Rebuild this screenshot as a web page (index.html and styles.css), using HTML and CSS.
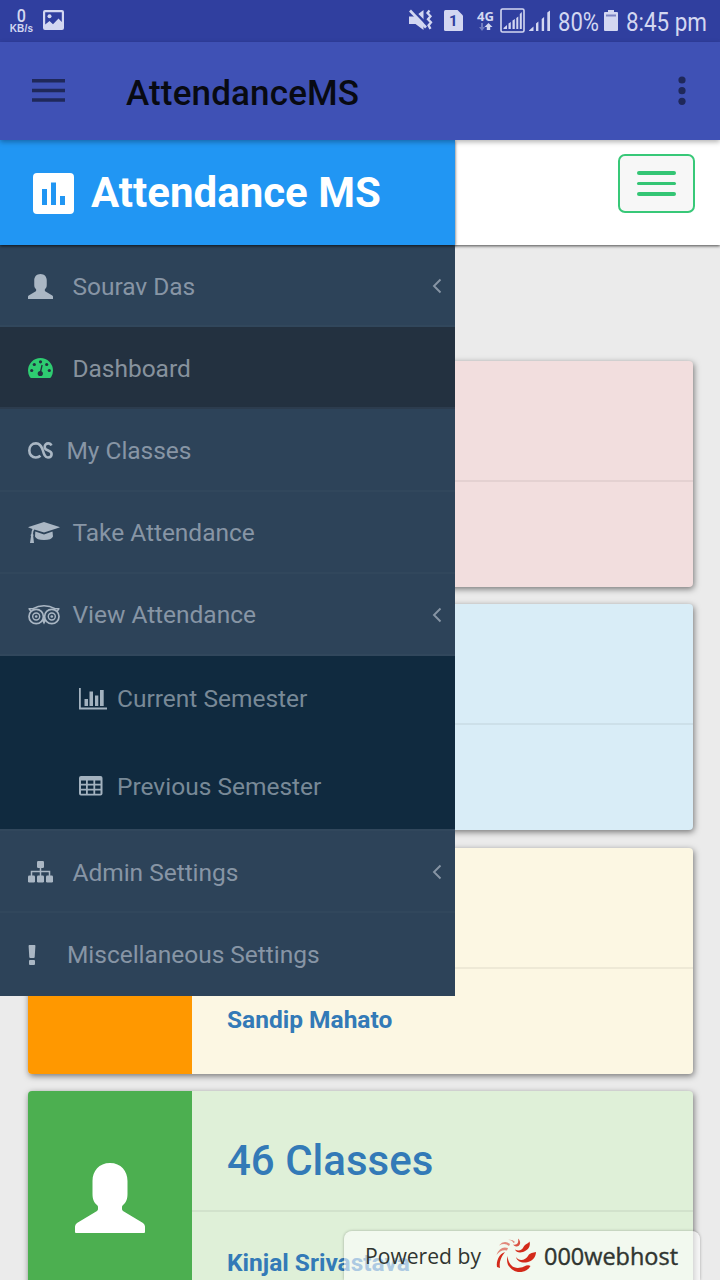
FILE: index.html
```html
<!DOCTYPE html>
<html lang="en">
<head>
<meta charset="utf-8">
<title>AttendanceMS</title>
<link rel="stylesheet" href="styles.css">
</head>
<body>
<svg class="defs" width="0" height="0" aria-hidden="true">
  <symbol id="user" viewBox="0 0 70 70"><path d="M35 0C24 0 17.500 8 17.500 18v13c0 6 2 9 4.500 11 1 1 1 1.500 1 3 0 1.500 0 2-1 3L2 60Q0 61.500 0 63.500V69q0 1 1 1h68q1 0 1-1v-5.500Q70 61.500 68 60L48 48c-1-1-1-1.500-1-3 0-1.500 0-2 1-3 2.500-2 4.500-5 4.500-11V18C52.500 8 46 0 35 0z"/></symbol>
  <symbol id="chevron" viewBox="0 0 10 16"><path d="M8.500 1.500 2 8l6.500 6.500" fill="none" stroke="currentColor" stroke-width="1.900"/></symbol>
</svg>
<div class="screen">
  <header class="statusbar">
    <div class="speed"><b>0</b><span>KB/s</span></div>
    <svg class="photo" width="21" height="21" viewBox="0 0 21 21"><path fill-rule="evenodd" d="M2 0h17q2 0 2 2v16q0 2-2 2H2q-2 0-2-2V2q0-2 2-2zM2.200 2.200v12.300L6.500 11l3.500 3.300L15.500 8.500l3.300 3.500V2.200z"/><circle cx="6.500" cy="6.300" r="2"/></svg>
    <div class="status-right">
      <svg class="mute" width="24" height="22" viewBox="0 0 24 22"><path d="M0 7.500h6L14.500 1V21L6.500 15H0z"/><path d="M2.500 0 19 16.500" stroke="#303f9f" stroke-width="2.500"/><path d="M1 1.500 17 18.500" fill="none" stroke="currentColor" stroke-width="2.600"/><path d="m20.500 1.500-2 2.500 3 3.200-2.500 3 3 3.200-2.500 3 2 3.500" fill="none" stroke="currentColor" stroke-width="2.300"/></svg>
      <svg class="sim" width="19" height="21" viewBox="0 0 19 21"><path d="M1.500 0h12L19 5.500v14q0 1.500-1.500 1.500h-16Q0 21 0 19.500v-18Q0 0 1.500 0z"/><text x="5" y="16" class="sim-no">1</text></svg>
      <svg class="network" width="17" height="22" viewBox="0 0 17 22"><text x="0" y="10.500" textLength="17" lengthAdjust="spacingAndGlyphs" class="net-label">4G</text><path d="M4 13h2v4h2l-3 4-3-4h2z" opacity=".4"/><path d="m11.500 13 4 4h-2.300v3h-3.400v-3H7.500z"/></svg>
      <svg class="boxed" width="25" height="25" viewBox="0 0 25 25"><rect x="1" y="1" width="23" height="23" rx="1.500" fill="none" stroke="currentColor" stroke-width="1.600"/><path d="M3.500 21v-1l3.500-3v4zM8.500 21v-5.500l2.300-1.500v7zM12.500 21v-8.500l2.300-1.500v10zM16.300 21V10l2-1.500V21zM19.800 21V6l2-2V21z"/></svg>
      <svg class="signal" width="22" height="21" viewBox="0 0 22 21"><path d="M0 21v-.500l4.500-4v4.500zM7 21v-7.500l2.400-2V21zM12.700 21V9l2.400-2v14zM18.300 21V2.500l2.700-2V21z"/></svg>
      <svg class="pct" width="41" height="31"><text x="0" y="21" textLength="41" lengthAdjust="spacingAndGlyphs">80%</text></svg>
      <svg class="battery" width="14" height="22" viewBox="0 0 14 22"><path d="M4 0h6v2h3q1 0 1 1v17q0 1-1 1H1q-1 0-1-1V3q0-1 1-1h3z"/><path d="M2 4.500h10v2H2z" fill="#7b83c2"/></svg>
      <svg class="clock" width="81" height="31"><text x="0" y="21" textLength="81" lengthAdjust="spacingAndGlyphs">8:45 pm</text></svg>
    </div>
  </header>
  <div class="appbar">
    <svg width="33" height="23" viewBox="0 0 33 23"><path d="M0 0h33v3.500H0zM0 9.700h33v3.500H0zM0 19.300h33v3.500H0z"/></svg>
    <h1>AttendanceMS</h1>
    <svg class="more" width="8" height="30" viewBox="0 0 8 30"><circle cx="4" cy="4" r="3.600"/><circle cx="4" cy="14.700" r="3.600"/><circle cx="4" cy="25.300" r="3.600"/></svg>
  </div>
  <div class="page">
    <div class="navbar"><div class="toggler"><i></i><i></i><i></i></div></div>
    <main class="cards">
      <section class="card red"><div class="badge"></div><div class="info"><div class="count"></div><div class="name"></div></div></section>
      <section class="card blue"><div class="badge"></div><div class="info"><div class="count"></div><div class="name"></div></div></section>
      <section class="card yellow"><div class="badge"></div><div class="info"><div class="count"></div><div class="name">Sandip Mahato</div></div></section>
      <section class="card green"><div class="badge"><svg width="70" height="70"><use href="#user"/></svg></div><div class="info"><div class="count">46 Classes</div><div class="name">Kinjal Srivastava</div></div></section>
    </main>
    <aside class="drawer">
      <div class="brand">
        <svg width="41" height="41" viewBox="0 0 41 41"><path fill-rule="evenodd" d="M4 0h33q4 0 4 4v33q0 4-4 4H4q-4 0-4-4V4q0-4 4-4zM9 16v16h5V16zM18 9.500V32h5V9.500zM27 23v9h5v-9z"/></svg>
        <span>Attendance MS</span>
      </div>
      <nav>
        <a class="item"><svg class="icon" width="25" height="25"><use href="#user"/></svg><span>Sourav Das</span><svg class="chev" width="10" height="16"><use href="#chevron"/></svg></a>
        <a class="item active"><svg class="icon" width="25" height="20" viewBox="0 0 25 20"><path fill="#2ecc71" d="M12.500 0A12.500 12.500 0 0 0 0 12.500q0 3.500 1.800 6.500.6 1 1.500 1h18.400q.9 0 1.500-1 1.800-3 1.800-6.500A12.500 12.500 0 0 0 12.500 0z"/><g fill="#233140"><circle cx="3.700" cy="12.500" r="1.600"/><circle cx="6.300" cy="6.500" r="1.600"/><circle cx="12.500" cy="3.800" r="1.600"/><circle cx="18.700" cy="6.500" r="1.600"/><circle cx="21.300" cy="12.500" r="1.600"/><circle cx="12.300" cy="15.500" r="2.600"/></g><path d="m12.300 15 1.800-8" stroke="#233140" stroke-width="1.300"/></svg><span>Dashboard</span></a>
        <a class="item narrow"><svg class="icon" width="25" height="17" viewBox="0 0 25 17"><path d="M12.500 13.700Q10.500 15.500 7.800 15.500C4 15.500 1.300 12.500 1.300 8.500S4 1.400 8 1.400c4 0 5.500 2.600 6.700 6.600 1.300 4.500 2.300 7.500 5.300 7.500 2.300 0 3.600-1.500 3.600-3.500 0-2.500-2-3-3.900-3.700-1.800-.6-3-1.300-3-3.300 0-2.200 1.500-3.600 3.500-3.600 1.600 0 2.600.7 3.200 2.200" fill="none" stroke="currentColor" stroke-width="2.600"/></svg><span>My Classes</span></a>
        <a class="item"><svg class="icon" width="32" height="22" viewBox="0 0 32 22"><path d="M16 0 31.500 5q.5.300 0 .600L16 10.500 6.300 7.500Q5 9 5 12q1 1 .2 2.200L6 21H2l1-6.800Q2 13 3.300 12q0-3 1.200-5.100L.5 5.600Q0 5.300.5 5z"/><path d="m7.300 9.500 8.700 2.900 8.500-2.900.5 5q-1.500 3.600-9 3.600t-9-3.600z"/></svg><span>Take Attendance</span></a>
        <a class="item"><svg class="icon" width="32" height="20" viewBox="0 0 32 20"><path d="M.5 3.700H6M31.500 3.700H26M5 3.700Q10 .8 16 .8t11 2.900M1 3.700l2 3M31 3.700l-2 3" fill="none" stroke="currentColor" stroke-width="1.500"/><path d="m14 15.500 2 4 2-4-2-3z"/><g fill="none" stroke="currentColor"><circle cx="8.200" cy="11.500" r="7.200" stroke-width="1.700"/><circle cx="23.800" cy="11.500" r="7.200" stroke-width="1.700"/><circle cx="8.200" cy="11.500" r="3.500" stroke-width="1.400"/><circle cx="23.800" cy="11.500" r="3.500" stroke-width="1.400"/></g><circle cx="8.200" cy="11.500" r="1.300"/><circle cx="23.800" cy="11.500" r="1.300"/></svg><span>View Attendance</span><svg class="chev" width="10" height="16"><use href="#chevron"/></svg></a>
        <div class="submenu">
          <a><svg width="28" height="22" viewBox="0 0 28 22"><path d="M0 0h1.800v19.500H28V21.500H0zM5.500 11h3.500v7H5.500zM10.500 3.500H14V18h-3.500zM16 7.500h3.300V18H16zM21 2h3.700v16H21z"/></svg><span>Current Semester</span></a>
          <a><svg width="24" height="20" viewBox="0 0 24 20"><path fill-rule="evenodd" d="M2 0h19.500q2 0 2 2v15.500q0 2-2 2H2q-2 0-2-2V2q0-2 2-2zM2 4.500v3.300h5V4.500zM8.800 4.500v3.300h5.600V4.500zM16.200 4.500v3.300h5.300V4.500zM2 9.500v3.200h5V9.500zM8.800 9.500v3.200h5.600V9.500zM16.200 9.500v3.200h5.300V9.500zM2 14.500v3.200h5v-3.200zM8.800 14.500v3.200h5.600v-3.200zM16.200 14.500v3.200h5.300v-3.200z"/></svg><span>Previous Semester</span></a>
        </div>
        <a class="item admin"><svg class="icon" width="25" height="22" viewBox="0 0 25 22"><rect x="9" y="0" width="7" height="7" rx="1.200"/><rect x="0" y="14.500" width="7" height="7" rx="1.200"/><rect x="9" y="14.500" width="7" height="7" rx="1.200"/><rect x="18" y="14.500" width="7" height="7" rx="1.200"/><path d="M12.500 6v9M3.500 15v-4.500h18V15" fill="none" stroke="currentColor" stroke-width="1.500"/></svg><span>Admin Settings</span><svg class="chev" width="10" height="16"><use href="#chevron"/></svg></a>
        <a class="item narrow last"><svg class="icon" width="8" height="20" viewBox="0 0 8 20"><path d="M1.300 0h5.400Q7.500 0 7.400 1L6.700 12q0 1-1 1H2.300q-1 0-1-1L.6 1q0-1 .7-1zM2 15h4q1 0 1 1v3q0 1-1 1H2q-1 0-1-1v-3q0-1 1-1z"/></svg><span>Miscellaneous Settings</span></a>
      </nav>
    </aside>
    <div class="powered">
      <svg width="356" height="49" viewBox="0 0 356 49">
        <text x="21" y="33" textLength="116" lengthAdjust="spacingAndGlyphs" class="by">Powered by</text>
        <g fill="#d32a1a">
          <path d="M163.500 25C164.500 35 171 39.500 180 35.500Q184 33.500 186.500 35C184 39.500 179 41.500 174 41 166 39.500 161.500 33 163.500 25Z"/>
          <path d="M172 26C175 31 182 29 184 25 186 21.500 189 22 192 21 192 26 188 31 182 31.500 177 32 173 30 172 26Z"/>
          <path d="M171 18.500C175 20.500 178 19 179.500 16 181 13 184 13 185.500 10.500 187 15 184 19.500 179 21 175 22 172 21 171 18.500Z"/>
          <path d="M169 13.500C173 14.500 175 12 174 7.500 178 11 176 16 172 15.500Q170 15 169 13.500Z" opacity=".8"/>
          <path d="M171 11Q168 8 164 9 168 8.500 169.500 12zM166 13Q160 8.500 155 14.500 161 11.500 165 15zM164 17Q156 14.500 152.500 24 157 18 163 19.500z" opacity=".55"/>
          <path d="M161 21C155 23 152 30 153 36L156 37C155 31 157 26 161 21Z"/>
        </g>
        <text x="200" y="34" textLength="134" lengthAdjust="spacingAndGlyphs" class="host">000webhost</text>
      </svg>
    </div>
  </div>
</div>
</body>
</html>
```
FILE: styles.css
```css
* { box-sizing: border-box; }
body { margin: 0; font-family: Roboto, "Liberation Sans", sans-serif; }
svg { display: block; flex: none; fill: currentColor; }
.defs { position: absolute; }
.screen { width: 720px; height: 1280px; overflow: hidden; display: flex; flex-direction: column; background: #ebebeb; }

.statusbar { flex: none; height: 42px; background: #303f9f; color: #d3d7f1; display: flex; align-items: flex-start; padding: 0 13px 0 9px; font-size: 26px; }
.statusbar svg { overflow: visible; }
.speed { width: 25px; height: 42px; padding-top: 8px; display: flex; flex-direction: column; align-items: center; font-family: "Liberation Sans", sans-serif; }
.speed b { font: 500 19px/16px Roboto, sans-serif; transform: scaleX(.85); }
.speed span { font-size: 10px; line-height: 10px; font-weight: 700; letter-spacing: .2px; }
.photo { margin: 10px 0 0 9px; }
.status-right { margin-left: auto; display: flex; align-items: flex-start; }
.mute { margin: 9px 11px 0 0; }
.sim { margin: 10px 14px 0 0; }
.sim-no { font: 700 15px Roboto, sans-serif; fill: #303f9f; }
.network { margin: 10px 6px 0 0; }
.net-label { font: 700 13px "Open Sans", sans-serif; }
.boxed { margin: 8px 4px 0 0; }
.signal { margin: 10px 7px 0 0; }
.pct { margin: 10px 5px 0 0; }
.battery { margin: 10px 8px 0 0; }
.clock { margin-top: 10px; }

.appbar { flex: none; height: 98px; background: #3f51b5; color: #1f285a; display: flex; align-items: center; padding: 0 34px 0 32px; position: relative; z-index: 5; box-shadow: 0 2px 5px rgba(0,0,0,.3); }
.appbar h1 { margin: 5px 0 0 61px; font-size: 35px; line-height: 42px; font-weight: 500; letter-spacing: .15px; color: #080a12; }
.appbar svg { margin-bottom: 1px; }
.more { margin-left: auto; }

.page { position: relative; flex: 1; min-height: 0; }
.navbar { height: 105px; background: #fff; box-shadow: 0 1px 3px rgba(0,0,0,.7); display: flex; justify-content: flex-end; padding: 14px 25px 0 0; }
.toggler { width: 77px; height: 59px; border: 2px solid #38c878; border-radius: 7px; background: #f7f7f7; display: flex; flex-direction: column; gap: 7px; align-items: center; padding-top: 15px; }
.toggler i { width: 39px; height: 3.500px; border-radius: 2px; background: #34c574; }

.cards { padding: 116px 27px 0 28px; display: flex; flex-direction: column; gap: 17.400px; }
.card { height: 226px; display: flex; border-radius: 4px; overflow: hidden; box-shadow: 1px 2px 6px rgba(0,0,0,.5); }
.badge { width: 164px; display: flex; justify-content: center; padding-top: 72px; color: #fff; }
.info { flex: 1; display: flex; flex-direction: column; color: #337ab7; }
.count { height: 121px; border-bottom: 2px solid rgba(0,0,0,.055); padding: 45px 0 0 35px; font-size: 42px; line-height: 50px; font-weight: 500; }
.name { padding: 36px 0 0 35px; font-size: 24.500px; line-height: 30px; font-weight: 700; }
.red { background: #f2dede; } .red .badge { background: #f44336; }
.blue { background: #d9edf7; } .blue .badge { background: #2196f3; }
.yellow { background: #fcf7e3; } .yellow .badge { background: #ff9800; }
.green { background: #dff0d8; } .green .badge { background: #4caf50; }

.drawer { position: absolute; top: 0; left: 0; width: 455px; height: 856px; background: #2d4359; color: #8795a5; }
.brand { position: relative; height: 105px; background: #2196f3; color: #fff; display: flex; align-items: center; gap: 17px; padding: 2px 0 0 33px; box-shadow: 0 1px 3px rgba(0,0,0,.7); }
.brand span { font-size: 42px; line-height: 50px; font-weight: 700; margin-top: -2px; }
.item { height: 82.200px; display: flex; align-items: center; padding: 2px 13px 0 28px; border-bottom: 2px solid #31475c; font-size: 24.500px; }
.item:first-child { padding-top: 2px; }
.item .icon { color: #aab7c4; margin-right: 19.500px; }
.item .icon[width="32"] { margin-right: 12.500px; }
.item span { letter-spacing: -.03px; }
.item.narrow .icon { margin-right: 13.500px; }
.item.last .icon { margin-right: 31px; }
.item.last { padding-top: 0; }
.active { background: #233140; border-bottom-color: #2c3c4e; color: #87929d; }
.chev { margin-left: auto; }
.submenu { height: 173.500px; background: #102a3f; color: #788997; font-size: 24.500px; }
.submenu a { height: 87.500px; display: flex; align-items: center; padding: 0 0 2px 78.500px; }
.submenu svg { color: #a3b2bf; margin-right: 10.500px; }
.submenu svg[width="24"] { margin-right: 14.500px; }
.admin { border-top: 2px solid #31475c; height: 84px; }
.last { border-bottom: 0; }

.powered { position: absolute; left: 344px; bottom: 0; width: 356px; height: 49px; border-radius: 8px 8px 0 0; background: rgba(255,255,255,.6); box-shadow: 0 0 3px rgba(0,0,0,.3); color: #303530; }
.by { font: 21px "Open Sans", sans-serif; }
.host { font: 23px "Open Sans", sans-serif; stroke: currentColor; stroke-width: .4px; }
```
